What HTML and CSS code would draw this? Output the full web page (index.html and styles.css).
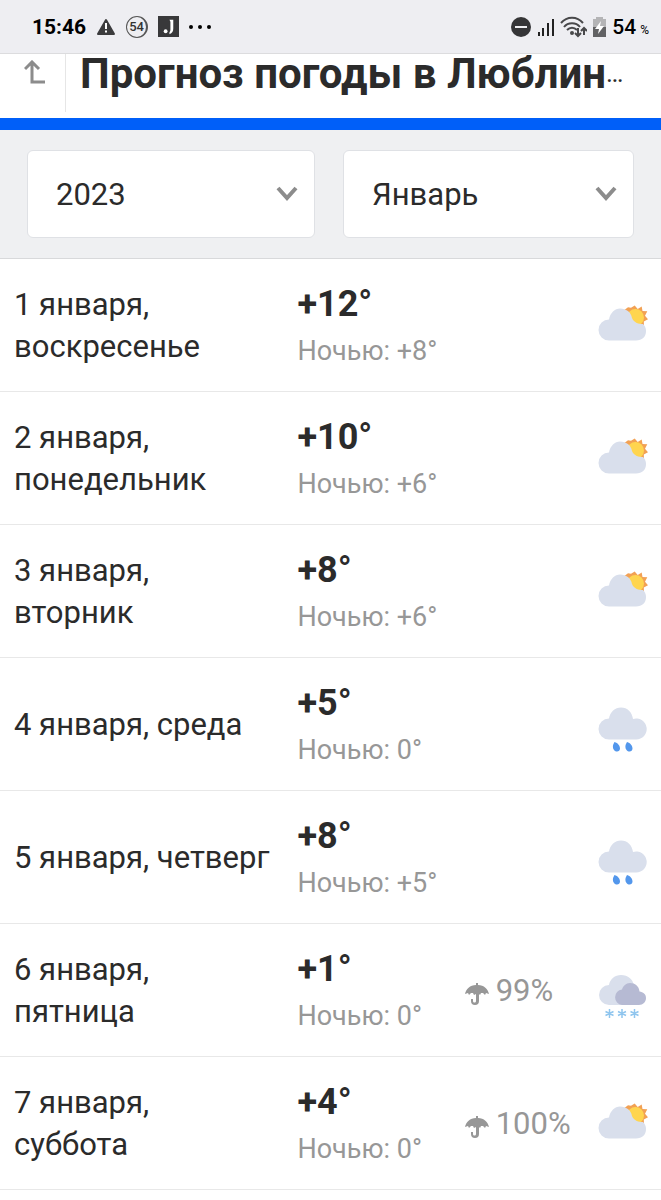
FILE: index.html
```
<!DOCTYPE html>
<html lang="ru">
<head>
  <meta charset="UTF-8">
  <meta name="viewport" content="width=device-width, initial-scale=1.0">
  <title>Прогноз погоды в Люблине</title>
  <link rel="stylesheet" href="styles.css">
</head>
<body>
  <!-- shared icons -->
  <svg class="sprite" aria-hidden="true">
    <symbol id="cloud" viewBox="0 0 50 54">
      <path fill="#d9dfec" d="M11 41.500A10.300 10.300 0 0 1 11 20.500C12 14 17 9.500 23 9.500C29.500 9.500 34 14 35 21A10.500 10.500 0 1 1 38 41.500z"/>
    </symbol>
    <symbol id="sun-cloud" viewBox="0 0 50 54">
      <path fill="#f2a154" d="M36.700 6.500l3 3.500 4-2.500.8 4.500 4.800.2-2.300 4.500 3 3.600-4.200 2.200.2 4.800-5-1-10-4-5-11 4-3 3 .500z"/>
      <circle cx="37.500" cy="18.500" r="8.500" fill="#ffd54f"/>
      <path fill="#d9dfec" d="M11 41.500A10.300 10.300 0 0 1 11 20.500C12 14 17 9.500 22 9.500C28 9.500 33 13 34 19C36 24 41 25 45 25C47 27 48 29 48 32C48 38 44 41.500 38 41.500z"/>
    </symbol>
    <symbol id="rain" viewBox="0 0 50 54">
      <use href="#cloud"/>
      <path fill="#5397ec" d="M16.500 44c3.500 1 5.500 4 5.500 6.500 0 3.500-4 4-6 1.500-2-2.500-1-5.500.5-8zM29 44c3.500 1 5.500 4 5.500 6.500 0 3.500-4 4-6 1.500-2-2.500-1-5.500.5-8z"/>
    </symbol>
    <symbol id="snow" viewBox="0 0 50 54">
      <path fill="#d9dfec" d="M11 41A10 10 0 0 1 11 21C12 15 17 11 23 11c7 0 12 4 13 11l-8 19z"/>
      <path fill="#b6bad3" d="M24 41a7.800 7.800 0 0 1 0-15.500C25 22 28 19 32 19c5 0 9 3 9.500 8.500C45 28 48 30 48 34c0 4-3 7-7 7z"/>
      <path stroke="#8fc5ee" stroke-width="1.500" fill="none" d="M11.500 45v9M7.500 47.500l8 4M15.500 47.500l-8 4M24 45v9M20 47.500l8 4M28 47.500l-8 4M36.500 45v9M32.500 47.500l8 4M40.500 47.500l-8 4"/>
    </symbol>
    <symbol id="umbrella" viewBox="0 0 24 24">
      <path fill="#979797" d="M11 3V1h2v2c6 0 10 4 11 9l-3-1-1 2-2-2-2 0-1 2-1-1v7a4 4 0 0 1-8 0v-2h2v2c0 2 3 2 3 0v-7l-2 1-1-2-2 0-2 2-1-2-3 1C1 7 5 3 11 3z"/>
    </symbol>
  </svg>

  <div class="status-bar">
    <div class="status-left">
      <span class="clock">15:46</span>
      <svg width="20" height="18" viewBox="0 0 20 18"><path fill="#3b3b3d" stroke="#3b3b3d" stroke-width="2" stroke-linejoin="round" d="M10 2l8 14H2z"/><path stroke="#fff" stroke-width="2" d="M10 5v6M10 12.500v2"/></svg>
      <span class="badge">54</span>
      <svg width="21" height="21" viewBox="0 0 22 22"><path fill="#38383a" d="M0 0h22v22H0z"/><path fill="#fff" d="M12 4h4v9c0 3-1 5-4 6v-2c1-1 1-2 1-4V6z"/><circle cx="8" cy="16" r="2" fill="#fff"/></svg>
      <svg width="22" height="4" viewBox="0 0 22 4"><circle cx="2" cy="2" r="2"/><circle cx="11" cy="2" r="2"/><circle cx="20" cy="2" r="2"/></svg>
    </div>
    <div class="status-right">
      <svg width="20" height="20" viewBox="0 0 20 20"><circle cx="10" cy="10" r="10" fill="#353537"/><path stroke="#eeeef2" stroke-width="2" d="M4 10h12"/></svg>
      <svg width="17" height="18" viewBox="0 0 17 18"><path stroke="#222" stroke-width="2" d="M2 14v4M6 10v8M11 5v13M16 1v17"/></svg>
      <svg width="27" height="22" viewBox="0 0 27 22"><path stroke="#48484a" stroke-width="2" fill="none" d="M1 7c6-7 16-7 22 0M4 11c4-5 12-5 16 0M7 14c3-3 7-3 10 0"/><circle cx="12" cy="17" r="2" fill="#48484a"/><path stroke="#48484a" stroke-width="2" fill="none" d="M18 12v8M15 17l3 3 3-3M24 19v-7M21 15l3-3 3 3"/></svg>
      <svg width="13" height="20" viewBox="0 0 13 20"><path fill="#b4b4b6" d="M0 2h3V0h7v2h3v8H0z"/><path fill="#626264" d="M0 10h13v10H0z"/><path fill="#fff" d="M8 4l-6 8h4l-1 5 6-8H7z"/></svg>
      <span class="battery">54<small>%</small></span>
    </div>
  </div>

  <header class="page-header">
    <a href="#" class="back" aria-label="Назад">
      <svg width="22" height="24" viewBox="0 0 22 24"><path stroke="#8c8c8c" stroke-width="3" fill="none" d="M21 22H8V3M1 9l7-7 7 7"/></svg>
    </a>
    <h1>Прогноз погоды в Люблин<span>…</span></h1>
  </header>

  <form class="filters">
    <select class="year" aria-label="Год">
      <option>2023</option>
    </select>
    <select class="month" aria-label="Месяц">
      <option>Январь</option>
    </select>
  </form>

  <table class="forecast">
    <tbody>
      <tr>
        <td class="date">1 января,<br>воскресенье</td>
        <td class="temp"><b>+12°</b><span>Ночью: +8°</span></td>
        <td class="rainfall"></td>
        <td class="icon"><svg><use href="#sun-cloud"/></svg></td>
      </tr>
      <tr>
        <td class="date">2 января,<br>понедельник</td>
        <td class="temp"><b>+10°</b><span>Ночью: +6°</span></td>
        <td class="rainfall"></td>
        <td class="icon"><svg><use href="#sun-cloud"/></svg></td>
      </tr>
      <tr>
        <td class="date">3 января,<br>вторник</td>
        <td class="temp"><b>+8°</b><span>Ночью: +6°</span></td>
        <td class="rainfall"></td>
        <td class="icon"><svg><use href="#sun-cloud"/></svg></td>
      </tr>
      <tr>
        <td class="date">4 января, среда</td>
        <td class="temp"><b>+5°</b><span>Ночью: 0°</span></td>
        <td class="rainfall"></td>
        <td class="icon"><svg><use href="#rain"/></svg></td>
      </tr>
      <tr>
        <td class="date">5 января, четверг</td>
        <td class="temp"><b>+8°</b><span>Ночью: +5°</span></td>
        <td class="rainfall"></td>
        <td class="icon"><svg><use href="#rain"/></svg></td>
      </tr>
      <tr>
        <td class="date">6 января,<br>пятница</td>
        <td class="temp"><b>+1°</b><span>Ночью: 0°</span></td>
        <td class="rainfall"><svg><use href="#umbrella"/></svg>99%</td>
        <td class="icon"><svg><use href="#snow"/></svg></td>
      </tr>
      <tr>
        <td class="date">7 января,<br>суббота</td>
        <td class="temp"><b>+4°</b><span>Ночью: 0°</span></td>
        <td class="rainfall"><svg><use href="#umbrella"/></svg>100%</td>
        <td class="icon"><svg><use href="#sun-cloud"/></svg></td>
      </tr>
    </tbody>
  </table>
</body>
</html>
```
FILE: styles.css
```
* {
  box-sizing: border-box;
}

body {
  margin: 0;
  font-family: Roboto, "Noto Sans", sans-serif;
  color: #2b2b2b;
  background: #fff;
}

.sprite {
  position: absolute;
  width: 0;
  height: 0;
}

.status-bar {
  display: flex;
  justify-content: space-between;
  align-items: center;
  height: 54px;
  padding: 0 12px 0 32px;
  background: #eeeef2;
  border-bottom: 1px solid #dcdcde;
  color: #000;
}

.status-left {
  display: flex;
  align-items: center;
  gap: 10px;
}

.status-right {
  display: flex;
  align-items: center;
  gap: 6px;
}

.clock {
  font-size: 21px;
  font-weight: bold;
}

.badge {
  width: 22px;
  height: 22px;
  border: 1px solid #555;
  border-right-width: 2px;
  border-radius: 50%;
  font-size: 13px;
  line-height: 20px;
  font-weight: 500;
  text-align: center;
  color: #333;
}

.battery {
  font-size: 21px;
  font-weight: 500;
}

.battery small {
  margin-left: 4px;
  font-size: 12px;
  font-weight: normal;
}

.page-header {
  display: flex;
  height: 76px;
  border-bottom: 12px solid #005ff9;
}

.back {
  width: 66px;
  height: 58px;
  padding: 6px 0 0 24px;
  border-right: 1px solid #e6e6e6;
}

h1 {
  display: flex;
  align-items: center;
  height: 38px;
  margin: 0;
  padding-left: 14px;
  font-size: 42px;
  white-space: nowrap;
}

h1 span {
  font-size: 26px;
  font-weight: normal;
}

.filters {
  display: grid;
  grid-template-columns: 288fr 291fr;
  gap: 28px;
  padding: 20px 27px;
  background: #eff0f2;
  border-bottom: 1px solid #d8d9db;
}

.filters select {
  height: 88px;
  padding: 0 28px;
  border: 1px solid #dfe1e5;
  border-radius: 6px;
  appearance: none;
  font-family: inherit;
  font-size: 31px;
  color: #2b2b2b;
  background: #fff url("data:image/svg+xml,%3Csvg xmlns='http://www.w3.org/2000/svg' width='22' height='16'%3E%3Cpath d='M2 2l9 10 9-10' fill='none' stroke='%238c8c8c' stroke-width='4'/%3E%3C/svg%3E") no-repeat right 16px center;
}

.forecast {
  width: 100%;
  border-spacing: 0;
}

.forecast td {
  height: 133px;
  padding: 1px 0 0;
  border-bottom: 1px solid #e8e8e8;
}

.forecast .date {
  width: 45%;
  padding-left: 14px;
  font-size: 31px;
  line-height: 42px;
}

.forecast .temp {
  width: 25%;
  padding-top: 3px;
}

.temp b,
.temp span {
  display: block;
}

.temp b {
  font-size: 36px;
  line-height: 48px;
}

.temp span {
  font-size: 27px;
  line-height: 46px;
  color: #979797;
}

.forecast .rainfall {
  padding-left: 2px;
  font-size: 31px;
  color: #979797;
  white-space: nowrap;
}

.rainfall svg {
  width: 24px;
  height: 24px;
  margin-right: 7px;
  vertical-align: -5px;
}

.forecast .icon {
  width: 64px;
  padding-right: 13px;
}

.icon svg {
  display: block;
  width: 50px;
  height: 54px;
  margin-left: auto;
}
```
